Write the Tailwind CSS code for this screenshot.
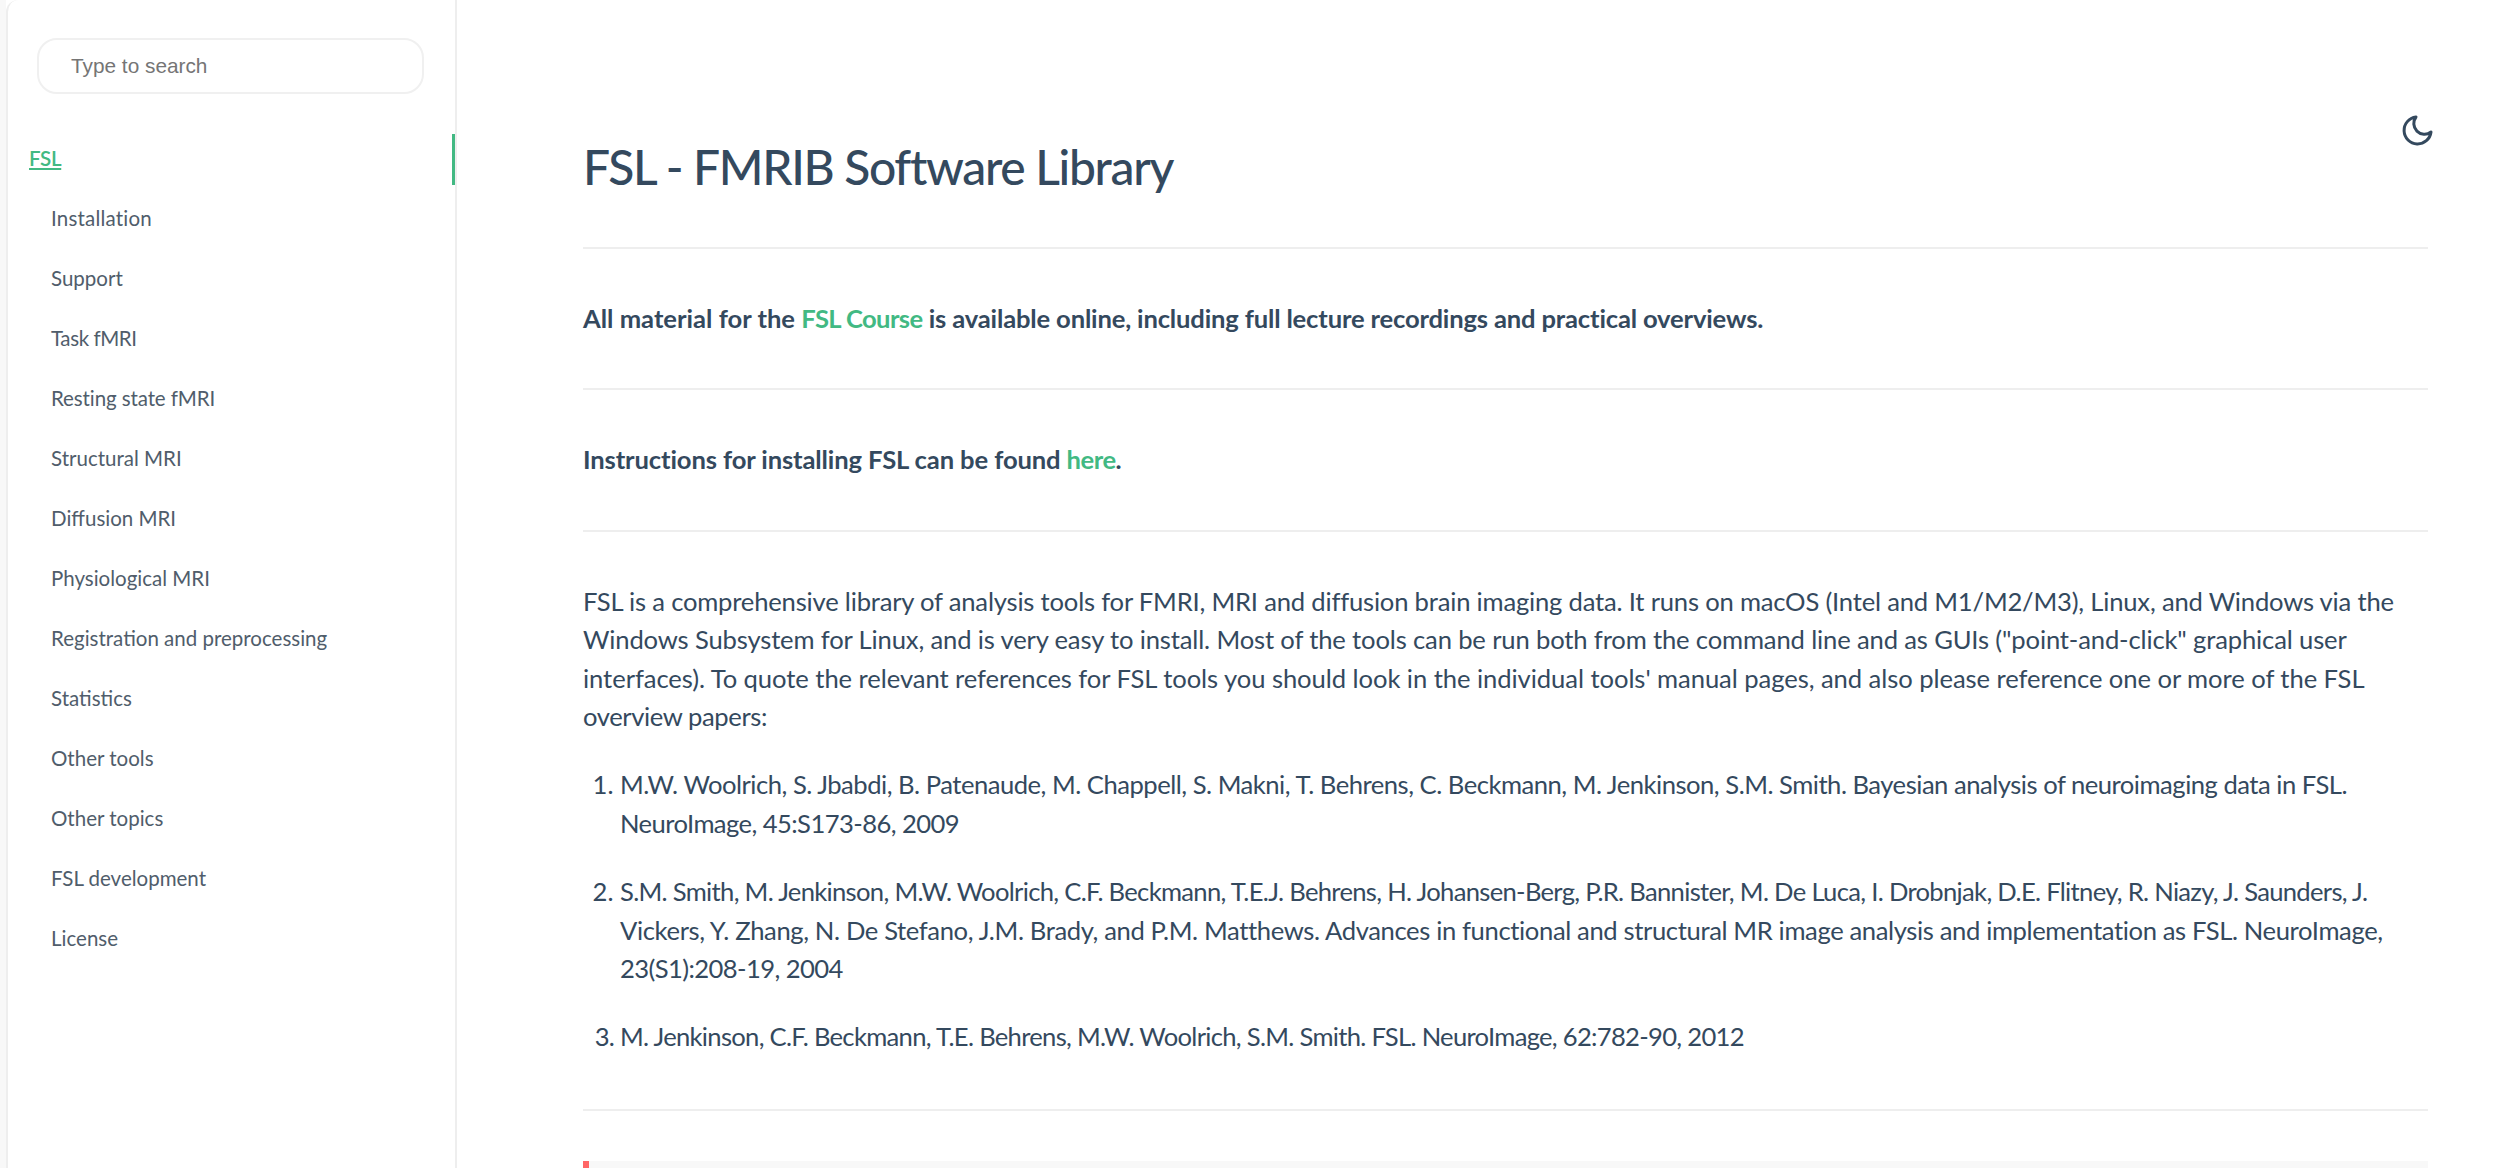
<!DOCTYPE html>
<html lang="en">
<head>
    <meta charset="UTF-8">
    <title>FSL - FMRIB Software Library</title>
    <script src="https://cdn.jsdelivr.net/npm/@tailwindcss/browser@4"></script>
</head>
<body class="h-[1168px] overflow-hidden bg-white flex font-['Lato',sans-serif] text-[#34495e]">
    <!-- sidebar -->
    <div class="w-[6px] bg-[#f8f8f8] shrink-0"></div>
    <aside class="w-[451px] shrink-0 border-l-2 border-r-2 border-[#eeeeee] rounded-tl-xl pt-[38px] text-[#505d6b]">
        <div class="ml-[29px] w-[387px] h-[56px] border-2 border-[#f0f0f0] rounded-[20px] flex items-center pl-[32px] font-['Liberation_Sans',sans-serif] text-[20.8px] text-[#757575]">Type to search</div>
        <ul class="mt-[34px] text-[20.5px]">
            <li class="relative h-[60px] flex items-center pl-[21px]">
                <a class="text-[#42b983] underline font-semibold tracking-[-0.3px]" href="#">FSL</a>
                <span class="absolute right-0 top-[6px] h-[51px] w-[3px] bg-[#42b983]"></span>
            </li>
            <li class="h-[60px] flex items-center pl-[43px] tracking-[0.2px]">Installation</li>
            <li class="h-[60px] flex items-center pl-[43px]">Support</li>
            <li class="h-[60px] flex items-center pl-[43px] tracking-[-0.4px]">Task fMRI</li>
            <li class="h-[60px] flex items-center pl-[43px] tracking-[-0.1px]">Resting state fMRI</li>
            <li class="h-[60px] flex items-center pl-[43px]">Structural MRI</li>
            <li class="h-[60px] flex items-center pl-[43px]">Diffusion MRI</li>
            <li class="h-[60px] flex items-center pl-[43px]">Physiological MRI</li>
            <li class="h-[60px] flex items-center pl-[43px]">Registration and preprocessing</li>
            <li class="h-[60px] flex items-center pl-[43px]">Statistics</li>
            <li class="h-[60px] flex items-center pl-[43px]">Other tools</li>
            <li class="h-[60px] flex items-center pl-[43px]">Other topics</li>
            <li class="h-[60px] flex items-center pl-[43px]">FSL development</li>
            <li class="h-[60px] flex items-center pl-[43px]">License</li>
        </ul>
    </aside>

    <!-- content -->
    <main class="relative flex-1 min-w-0 pl-[126px] pr-[91px] pt-[137px] text-[25.6px] leading-[38.4px] whitespace-nowrap">
        <svg class="absolute left-[1944px] top-[115px] w-[32px] h-[32px]" viewBox="0 0 32 32" fill="none" stroke="#34495e" stroke-width="3" stroke-linejoin="round" stroke-linecap="round">
            <path d="M15 2A13.5 13.5 0 1 0 30 17 10.7 10.7 0 0 1 15 2Z"/>
        </svg>
        <h1 class="text-[48px] leading-[60px] font-medium tracking-[-1.32px] pb-[50px] border-b-2 border-[#eeeeee]">FSL - FMRIB Software Library</h1>
        <p class="font-bold pt-[50px] pb-[51px] border-b-2 border-[#eeeeee]">All material for the <a class="text-[#42b983] tracking-[-0.6px]" href="#">FSL Course</a> <span class="tracking-[-0.165px]">is available online, including full lecture recordings and practical overviews.</span></p>
        <p class="font-bold tracking-[-0.12px] pt-[50px] pb-[51px] border-b-2 border-[#eeeeee]">Instructions for installing FSL can be found <a class="text-[#42b983] tracking-[-0.5px]" href="#">here</a>.</p>
        <p class="pt-[50px]">
            <span class="block tracking-[-0.195px]">FSL is a comprehensive library of analysis tools for FMRI, MRI and diffusion brain imaging data. It runs on macOS (Intel and M1/M2/M3), Linux, and Windows via the</span>
            <span class="block tracking-[-0.15px]">Windows Subsystem for Linux, and is very easy to install. Most of the tools can be run both from the command line and as GUIs ("point-and-click" graphical user</span>
            <span class="block tracking-[-0.06px]">interfaces). To quote the relevant references for FSL tools you should look in the individual tools' manual pages, and also please reference one or more of the FSL</span>
            <span class="block tracking-[-0.4px]">overview papers:</span>
        </p>
        <ol class="list-decimal pl-[37px] mt-[30px]">
            <li>
                <span class="block tracking-[-0.49px]">M.W. Woolrich, S. Jbabdi, B. Patenaude, M. Chappell, S. Makni, T. Behrens, C. Beckmann, M. Jenkinson, S.M. Smith. Bayesian analysis of neuroimaging data in FSL.</span>
                <span class="block tracking-[-0.57px]">NeuroImage, 45:S173-86, 2009</span>
            </li>
            <li class="mt-[30px]">
                <span class="block tracking-[-0.69px]">S.M. Smith, M. Jenkinson, M.W. Woolrich, C.F. Beckmann, T.E.J. Behrens, H. Johansen-Berg, P.R. Bannister, M. De Luca, I. Drobnjak, D.E. Flitney, R. Niazy, J. Saunders, J.</span>
                <span class="block tracking-[-0.37px]">Vickers, Y. Zhang, N. De Stefano, J.M. Brady, and P.M. Matthews. Advances in functional and structural MR image analysis and implementation as FSL. NeuroImage,</span>
                <span class="block tracking-[-0.59px]">23(S1):208-19, 2004</span>
            </li>
            <li class="mt-[30px] tracking-[-0.7px]">M. Jenkinson, C.F. Beckmann, T.E. Behrens, M.W. Woolrich, S.M. Smith. FSL. NeuroImage, 62:782-90, 2012</li>
        </ol>
        <div class="mt-[53px] border-t-2 border-[#eeeeee]"></div>
        <div class="mt-[50px] h-[40px] border-l-[6px] border-[#ff6666] bg-[#f8f8f8]"></div>
    </main>
</body>
</html>
